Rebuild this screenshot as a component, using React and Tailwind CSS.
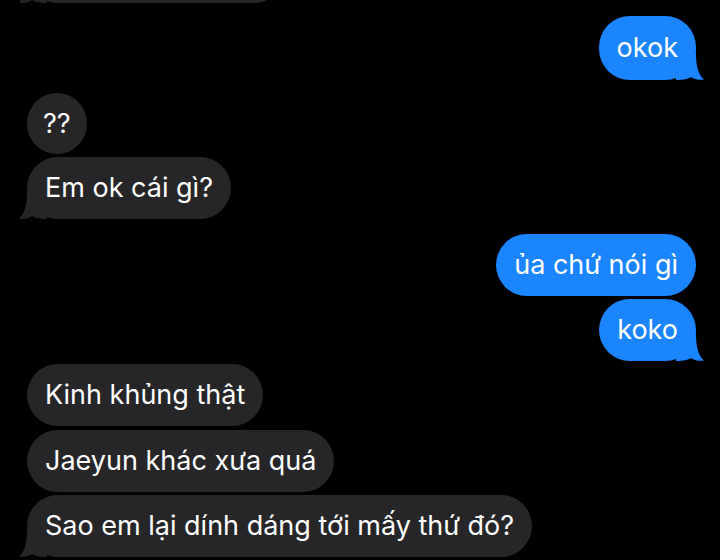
import React from "react";

function Tail({ side, color }) {
  const pos = side === "right" ? "right-[-8px]" : "left-[-8px] -scale-x-100";
  return (
    <svg
      className={`absolute bottom-0 ${pos}`}
      width="28"
      height="28"
      viewBox="0 0 28 28"
      aria-hidden="true"
    >
      <path
        d="M0 28 L0 0 L20 0 C20 14 22 22 28 27.6 C23 28.4 18 27.2 15 25 C12 27 8 28 0 28 Z"
        fill={color}
      />
    </svg>
  );
}

function Bubble({ text, side, tail, mt, h = "h-[62px]", extra = "px-[18px]" }) {
  const right = side === "right";
  const color = right ? "#1a85ff" : "#262628";
  return (
    <div className={`flex ${right ? "justify-end pr-[24px]" : "justify-start pl-[27px]"} ${mt}`}>
      <div
        className={`relative flex items-center ${h} rounded-[31px] text-white text-[27px] leading-none ${
          right ? "bg-[#1a85ff]" : "bg-[#262628]"
        } ${extra}`}
      >
        {tail && <Tail side={side} color={color} />}
        <span className="relative -mt-[1px]">{text}</span>
      </div>
    </div>
  );
}

export default function App() {
  return (
    <div
      className="w-[720px] h-[560px] bg-black overflow-hidden flex flex-col"
      style={{ fontFamily: "Inter, 'Noto Sans', sans-serif" }}
    >
      <div className="flex justify-start pl-[27px] mt-[-59px]">
        <div className="relative h-[62px] w-[258px] rounded-[31px] bg-[#262628]">
          <Tail side="left" color="#262628" />
        </div>
      </div>
      <Bubble text="okok" side="right" tail mt="mt-[13px]" h="h-[64px]" />
      <Bubble text="??" side="left" mt="mt-[13px]" h="h-[61px]" extra="px-[16px]" />
      <Bubble text="Em ok cái gì?" side="left" tail mt="mt-[3px]" />
      <Bubble text="ủa chứ nói gì" side="right" mt="mt-[15px]" />
      <Bubble text="koko" side="right" tail mt="mt-[3px]" />
      <Bubble text="Kinh khủng thật" side="left" mt="mt-[3px]" />
      <Bubble text="Jaeyun khác xưa quá" side="left" mt="mt-[4px]" />
      <Bubble text="Sao em lại dính dáng tới mấy thứ đó?" side="left" tail mt="mt-[3px]" />
    </div>
  );
}
